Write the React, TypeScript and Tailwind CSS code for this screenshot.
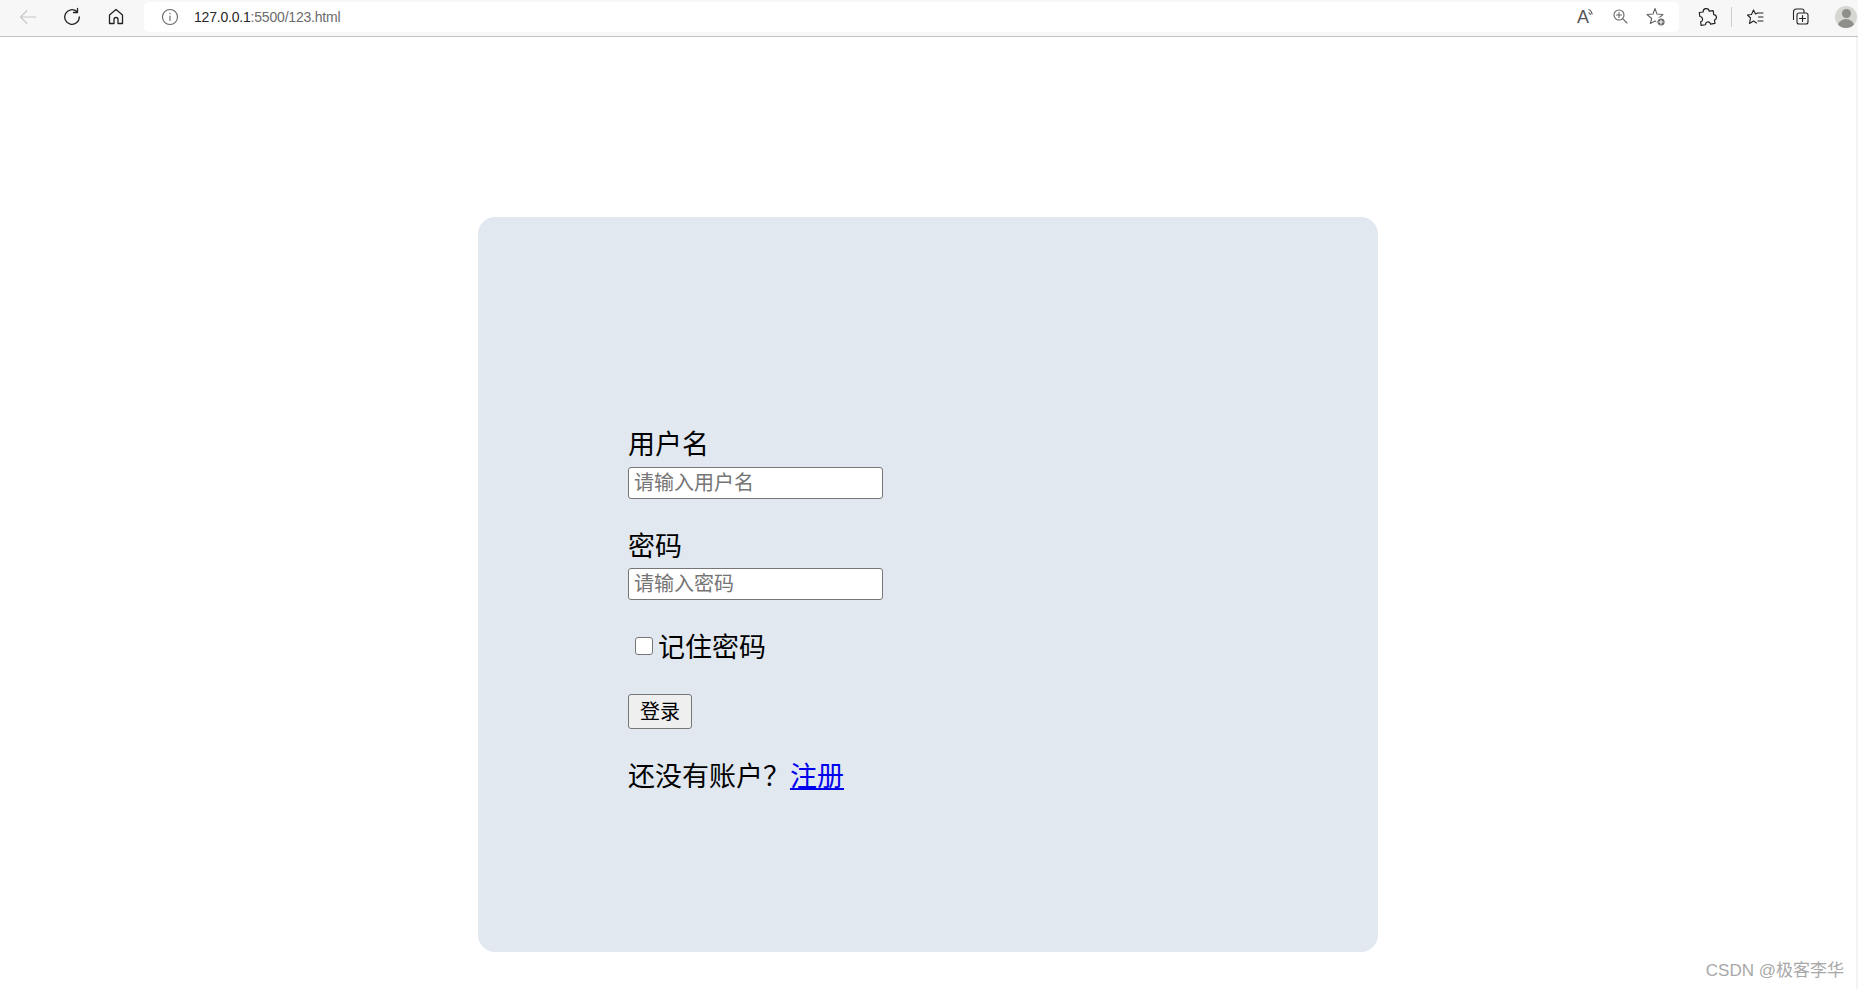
import React from "react";

const cjk = '"Liberation Sans","Noto Sans CJK SC",sans-serif';

function Icon({ stroke, width = 1.1, className = "", children }: { stroke: string; width?: number; className?: string; children: React.ReactNode }) {
  return (
    <svg width="20" height="20" viewBox="0 0 20 20" fill="none" stroke={stroke} strokeWidth={width} strokeLinejoin="round" strokeLinecap="round" className={`shrink-0 ${className}`}>
      {children}
    </svg>
  );
}

const fieldClass =
  "block h-[32px] w-[255px] rounded-[3px] border border-[#767676] bg-white px-[5px] text-[20px] leading-[30px] placeholder:text-[#757575]";

export default function App() {
  return (
    <div className="relative flex h-[989px] w-[1858px] flex-col overflow-hidden bg-white" style={{ fontFamily: cjk }}>
      <header className="flex h-[37px] shrink-0 items-center border-b border-[#c4c4c4] bg-[#f7f7f7] pb-[2px]">
        <Icon stroke="#c8c8c8" className="ml-[18px]"><path d="M18 10H2.500M9 3.500L2.500 10 9 16.500" /></Icon>
        <Icon stroke="#222" width={1.3} className="ml-[24px]"><path d="M17.300 10a7.300 7.300 0 1 1-2.500-5.500M15.500 1.500v4h-4" /></Icon>
        <Icon stroke="#222" width={1.3} className="ml-[24px]"><path d="M10 2.500L3.500 8v8.500H8v-4a2 2 0 0 1 4 0v4h4.500V8z" /></Icon>
        <div className="ml-[18px] flex h-[30px] w-[1535px] shrink-0 items-center rounded-[5px] bg-white">
          <Icon stroke="#666" className="ml-[16px]"><circle cx="10" cy="10" r="7.500" /><path d="M10 9v4.500M10 6.300v.5" /></Icon>
          <span className="ml-[14px] text-[14px] tracking-[-0.2px] text-[#2a2a2a]">127.0.0.1<span className="text-[#6b6b6b]">:5500/123.html</span></span>
          <div className="ml-auto mr-[13px] flex items-center">
            <div className="relative h-[20px] w-[20px] shrink-0">
              <span className="absolute left-[2px] top-[1px] text-[18px] font-light leading-[18px] text-[#555]">A</span>
              <svg width="20" height="20" viewBox="0 0 20 20" fill="none" stroke="#555" strokeWidth="1.100" className="absolute left-0 top-0"><path d="M13.500 2.500c2.200.7 3.300 2.500 3.700 5M13.500 5.500c1.200.3 1.800 1.200 2 2.500" /></svg>
            </div>
            <Icon stroke="#666" className="ml-[15px]"><circle cx="9" cy="8" r="5" /><path d="M12.700 11.700L17 16M6.500 8h5M9 5.500v5" /></Icon>
            <Icon stroke="#666" className="ml-[16px]">
              <path d="M9 1.500L11 7l6 .5-4.700 4 1.400 5L9 14l-4.700 2.500 1.400-5L1 7.500 7 7z" />
              <circle cx="15" cy="15" r="4.200" fill="#666" stroke="#fff" strokeWidth="1.200" />
              <path d="M13 15h4M15 13v4" stroke="#fff" />
            </Icon>
          </div>
        </div>
        <Icon stroke="#222" width={1.2} className="ml-[18px]"><path d="M7 4.500a3 3 0 0 1 6 0h4v4a2.800 2.800 0 0 1 0 5.500v3.500h-4.500a2.500 2.500 0 0 0-5 0H3V14a2.800 2.800 0 0 0 0-5.500V4.500z" transform="rotate(-8 10 10)" /></Icon>
        <span className="ml-[14px] h-[20px] w-px shrink-0 bg-[#ccc]" />
        <Icon stroke="#222" className="ml-[14px]"><path d="M17 6h-5.500L9.500 7M7.500 3L5.500 7.500 1.500 8l3 3-1 5.500 4-2.500 3 2M7.500 3l2 4M12.500 10H17M12 14h5" /></Icon>
        <Icon stroke="#222" className="ml-[24px]"><path d="M3.500 12.500V5a3 3 0 0 1 3-3H12a2 2 0 0 1 2 2v1.500" /><rect x="7" y="6" width="11" height="11" rx="2" /><path d="M12.500 8.500v6M9.500 11.500h6" /></Icon>
        <div className="ml-[25px] h-[22px] w-[22px] shrink-0 overflow-hidden rounded-full bg-[#d6d6d2]">
          <div className="mx-auto mt-[3px] h-[9px] w-[9px] rounded-full bg-[#8e8e8a]" />
          <div className="mx-auto mt-[1px] h-[12px] w-[18px] rounded-t-full bg-[#8e8e8a]" />
        </div>
      </header>
      <main className="flex flex-1">
        <section className="ml-[478px] mt-[180px] h-[735px] w-[900px] rounded-[17px] bg-[#e1e8ef] pl-[150px] pt-[206px] text-black">
          <form>
            <label className="block text-[27px] leading-[44px]">用户名</label>
            <input placeholder="请输入用户名" className={fieldClass} />
            <label className="mt-[27px] block text-[27px] leading-[42px]">密码</label>
            <input placeholder="请输入密码" className={fieldClass} />
            <label className="mt-[27px] flex h-[42px] items-center text-[27px]">
              <input type="checkbox" className="mb-[4px] ml-[7px] mr-[5px] h-[18px] w-[18px] appearance-none rounded-[3px] border-[1.5px] border-[#767676] bg-white" />记住密码
            </label>
            <button type="button" className="mt-[25px] block h-[35px] w-[64px] rounded-[3px] border border-[#767676] bg-[#efefef] text-[20px] leading-none">登录</button>
            <p className="mt-[26px] text-[27px] leading-[44px]">还没有账户？<a href="#" className="text-[#0000ee] underline">注册</a></p>
          </form>
        </section>
        <div className="ml-auto w-[2px] bg-[#f3f3f3]" />
      </main>
      <span className="absolute bottom-[6px] right-[14px] text-[17px] text-[#a8a8a8]">CSDN @极客李华</span>
    </div>
  );
}
